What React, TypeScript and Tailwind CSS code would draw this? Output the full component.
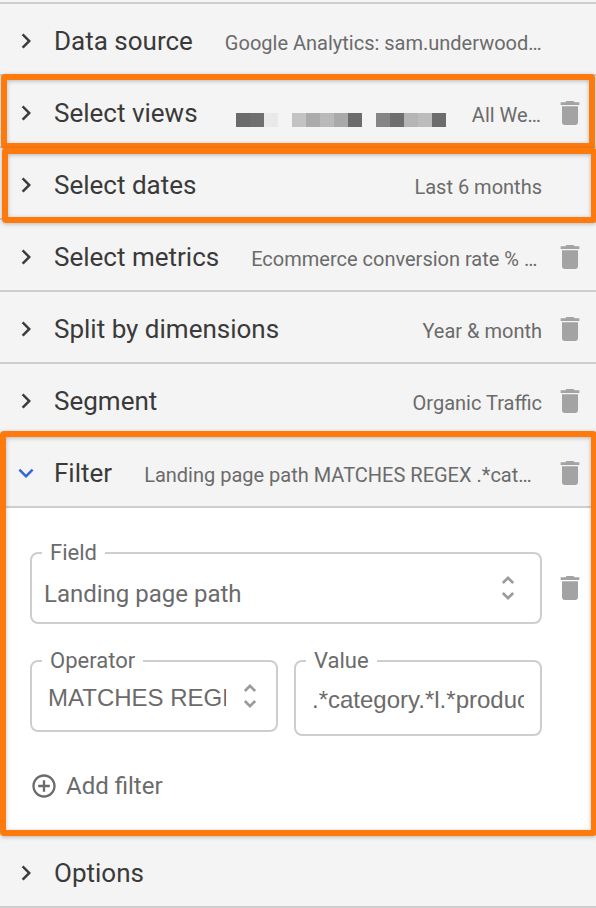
import { ReactNode, useState } from "react";
import { clsx } from "clsx";
import {
  MdAddCircleOutline,
  MdChevronRight,
  MdDelete,
  MdExpandMore,
  MdUnfoldMore,
} from "react-icons/md";

// Pixelated account name, one shade per block
const REDACTED = [
  "bg-[#6b6b6b]",
  "bg-[#6f6f6f]",
  "bg-[#e9e9e9]",
  "bg-transparent",
  "bg-[#c3c3c3]",
  "bg-[#ababab]",
  "bg-[#b9b9b9]",
  "bg-[#a9a9a9]",
  "bg-[#6b6b6b]",
  "bg-transparent",
  "bg-[#858585]",
  "bg-[#6e6e6e]",
  "bg-[#b5b5b5]",
  "bg-[#bcbcbc]",
  "bg-[#6c6c6c]",
];

function Highlight({ className }: { className: string }) {
  return (
    <div
      className={clsx(
        "pointer-events-none absolute z-10 rounded border-6 border-[#ff7a0d] drop-shadow-[0_1px_2px_rgba(0,0,0,0.25)]",
        className
      )}
    />
  );
}

function DeleteButton({ label }: { label: string }) {
  return (
    <button type="button" aria-label={label} className="shrink-0 text-[#a3a3a3]">
      <MdDelete className="size-8" />
    </button>
  );
}

type SectionProps = {
  title: string;
  summary?: ReactNode;
  fill?: boolean;
  removable?: boolean;
  open?: boolean;
  onToggle?: () => void;
};

function SectionHeader({ title, summary, fill, removable, open, onToggle }: SectionProps) {
  return (
    <div className="flex h-18 items-center gap-3 border-b-2 border-[#cecece] bg-[#f4f4f4] pt-1 pr-[10px] pl-[11px]">
      <button
        type="button"
        aria-expanded={!!open}
        onClick={onToggle}
        className="flex min-w-0 flex-1 items-center gap-[13px] text-left"
      >
        {open ? (
          <MdExpandMore className="size-[30px] shrink-0 text-[#3367d6]" />
        ) : (
          <MdChevronRight className="size-[30px] shrink-0 text-[#3c3c3c]" />
        )}
        <span className="flex min-w-0 flex-1 items-baseline gap-8">
          <span className="shrink-0 text-[26px] leading-8 text-[#3a3a3a]">{title}</span>
          <span
            className={clsx(
              "min-w-0 flex-1 truncate text-[20px] leading-6 text-[#6b6b6b]",
              !fill && "text-right"
            )}
          >
            {summary}
          </span>
        </span>
      </button>
      {removable ? <DeleteButton label={`Remove ${title}`} /> : <span className="w-8 shrink-0" />}
    </div>
  );
}

function Outlined({
  id,
  label,
  className,
  children,
}: {
  id: string;
  label: string;
  className?: string;
  children: ReactNode;
}) {
  return (
    <div className={clsx("relative flex min-w-0 items-center rounded-lg border-2 border-[#cecece]", className)}>
      <label
        htmlFor={id}
        className="absolute -top-[15px] left-[10px] bg-white px-2 text-[22px] leading-7 text-[#6b6b6b]"
      >
        {label}
      </label>
      {children}
    </div>
  );
}

export default function App() {
  const [filterOpen, setFilterOpen] = useState(true);
  const [value, setValue] = useState(".*category.*l.*product");

  return (
    <main className="overflow-x-hidden bg-[#f4f4f4] pt-0.5 font-[Roboto,sans-serif]">
      <div className="border-t-2 border-[#cecece]">
        <SectionHeader title="Data source" summary="Google Analytics: sam.underwood…" fill />

        <section className="relative">
          <SectionHeader
            title="Select views"
            fill
            removable
            summary={
              <span className="flex items-end justify-between pr-px pb-px pl-1.5">
                <span className="flex">
                  {REDACTED.map((shade, i) => (
                    <span key={i} className={clsx("size-3.5", shade)} />
                  ))}
                </span>
                <span className="self-baseline">All We…</span>
              </span>
            }
          />
          <Highlight className="-top-0.5 right-px -bottom-px left-px" />
        </section>

        <section className="relative">
          <SectionHeader title="Select dates" summary="Last 6 months" />
          <Highlight className="top-0 -right-px -bottom-[3px] left-0.5" />
        </section>

        <SectionHeader title="Select metrics" summary="Ecommerce conversion rate % …" fill removable />
        <SectionHeader title="Split by dimensions" summary="Year & month" removable />
        <SectionHeader title="Segment" summary="Organic Traffic" removable />

        <section className="relative">
          <SectionHeader
            title="Filter"
            summary="Landing page path MATCHES REGEX .*cat…"
            fill
            removable
            open={filterOpen}
            onToggle={() => setFilterOpen(!filterOpen)}
          />
          {filterOpen && (
            <div className="bg-white pt-11 pr-[10px] pb-8 pl-[30px]">
              <div className="flex items-center gap-3">
                <Outlined id="field" label="Field" className="h-18 flex-1">
                  <select
                    id="field"
                    className="h-full w-full appearance-none pt-3 pr-16 pl-3 text-[24px] text-[#6b6b6b] outline-none"
                  >
                    <option>Landing page path</option>
                  </select>
                  <MdUnfoldMore className="pointer-events-none absolute right-4 size-8 text-[#9b9b9b]" />
                </Outlined>
                <DeleteButton label="Remove field" />
              </div>

              <div className="mt-9 mr-11 grid grid-cols-2 items-start gap-4">
                <Outlined id="operator" label="Operator" className="h-18 pr-[10px] pl-4">
                  <select
                    id="operator"
                    className="h-full min-w-0 flex-1 appearance-none overflow-hidden pt-1 font-['Liberation_Sans',sans-serif] text-[24px] text-[#6b6b6b] outline-none"
                  >
                    <option>MATCHES REGEX</option>
                  </select>
                  <MdUnfoldMore className="pointer-events-none ml-2 size-8 shrink-0 text-[#9b9b9b]" />
                </Outlined>
                <Outlined id="value" label="Value" className="h-19 px-4">
                  <input
                    id="value"
                    type="text"
                    value={value}
                    onChange={(e) => setValue(e.target.value)}
                    className="h-full w-full min-w-0 pt-1 font-['Liberation_Sans',sans-serif] text-[24px] text-[#6b6b6b] outline-none"
                  />
                </Outlined>
              </div>

              <button type="button" className="mt-8 flex h-9 items-center gap-2 text-[24px] text-[#6b6b6b]">
                <MdAddCircleOutline className="size-7" />
                Add filter
              </button>
            </div>
          )}
          <Highlight className="-top-[5px] -right-px bottom-0 left-0" />
        </section>

        <SectionHeader title="Options" />
      </div>
    </main>
  );
}
